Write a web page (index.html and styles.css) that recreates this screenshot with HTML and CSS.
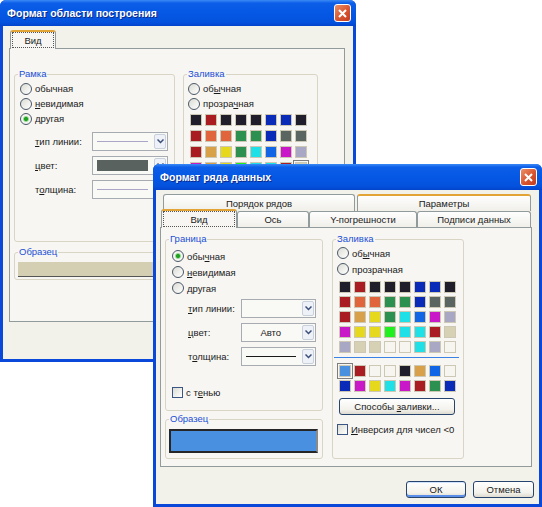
FILE: index.html
```html
<!DOCTYPE html>
<html lang="ru">
<head>
  <meta charset="UTF-8">
  <meta name="viewport" content="width=device-width, initial-scale=1.0">
  <title>Формат ряда данных</title>
  <link rel="stylesheet" href="styles.css">
</head>
<body>
  <div class="desktop">

    <!-- окно позади -->
    <div class="window back">
      <div class="titlebar">
        <span class="title">Формат области построения</span>
        <span class="close"><svg width="9" height="9" viewBox="0 0 9 9"><path d="M1 1L8 8M8 1L1 8" stroke="#fff" stroke-width="2"/></svg></span>
      </div>
      <div class="client">
        <div class="tabrow">
          <div class="tab active"><span class="focus">Вид</span></div>
        </div>
        <div class="panel">
          <div class="cols">
            <fieldset class="group frame-b">
              <legend>Рамка</legend>
              <div class="inner">
                <label class="radio"><i></i><span>обычная</span></label>
                <label class="radio"><i></i><span><u>н</u>евидимая</span></label>
                <label class="radio"><i class="on"></i><span><u>д</u>ругая</span></label>
                <div class="field">
                  <span class="lbl"><u>т</u>ип линии:</span>
                  <span class="combo"><span class="val"><span class="line pale"></span></span><span class="arr"><svg width="7" height="5" viewBox="0 0 7 5"><path d="M.5 .5L3.5 3.5L6.5 .5" fill="none" stroke="#3c4f78" stroke-width="1.5"/></svg></span></span>
                </div>
                <div class="field">
                  <span class="lbl"><u>ц</u>вет:</span>
                  <span class="combo"><span class="val"><span class="fillbox"></span></span><span class="arr"><svg width="7" height="5" viewBox="0 0 7 5"><path d="M.5 .5L3.5 3.5L6.5 .5" fill="none" stroke="#3c4f78" stroke-width="1.5"/></svg></span></span>
                </div>
                <div class="field">
                  <span class="lbl">т<u>о</u>лщина:</span>
                  <span class="combo"><span class="val"><span class="line pale"></span></span><span class="arr"><svg width="7" height="5" viewBox="0 0 7 5"><path d="M.5 .5L3.5 3.5L6.5 .5" fill="none" stroke="#3c4f78" stroke-width="1.5"/></svg></span></span>
                </div>
              </div>
            </fieldset>
            <fieldset class="group fill-b">
              <legend>Заливка</legend>
              <div class="inner">
                <label class="radio"><i></i><span>об<u>ы</u>чная</span></label>
                <label class="radio"><i></i><span>прозра<u>ч</u>ная</span></label>
                <div class="palette">
                  <span class="k"></span><span class="r"></span><span class="k"></span><span class="k"></span><span class="k"></span><span class="b"></span><span class="b"></span><span class="k"></span>
                  <span class="r"></span><span class="o"></span><span class="o"></span><span class="g"></span><span class="g"></span><span class="b"></span><span class="gy"></span><span class="gy"></span>
                  <span class="r"></span><span class="t"></span><span class="y"></span><span class="g"></span><span class="c"></span><span class="bl"></span><span class="m"></span><span class="lv"></span>
                  <span class="m"></span><span class="t"></span><span class="y"></span><span class="lg"></span><span class="c"></span><span class="c"></span><span class="r"></span><span class="kh sel"></span>
                </div>
              </div>
            </fieldset>
          </div>
          <fieldset class="group sample-b">
            <legend>Образец</legend>
            <div class="inner">
              <div class="preview khaki"></div>
            </div>
          </fieldset>
        </div>
      </div>
    </div>

    <!-- окно спереди -->
    <div class="window front">
      <div class="titlebar">
        <span class="title">Формат ряда данных</span>
        <span class="close"><svg width="9" height="9" viewBox="0 0 9 9"><path d="M1 1L8 8M8 1L1 8" stroke="#fff" stroke-width="2"/></svg></span>
      </div>
      <div class="client">
        <div class="tabrow top">
          <div class="tab w-order">Порядок рядов</div>
          <div class="tab hot w-params">Параметры</div>
        </div>
        <div class="tabrow low">
          <div class="tab active rise w-view"><span class="focus">Вид</span></div>
          <div class="tab w-axis">Ось</div>
          <div class="tab w-err">Y-погрешности</div>
          <div class="tab w-labels">Подписи данных</div>
        </div>
        <div class="panel">
          <div class="cols">
            <div class="stack">
              <fieldset class="group frame-f">
                <legend>Граница</legend>
                <div class="inner">
                  <label class="radio"><i class="on"></i><span>обы<u>ч</u>ная</span></label>
                  <label class="radio"><i></i><span><u>н</u>евидимая</span></label>
                  <label class="radio"><i></i><span><u>д</u>ругая</span></label>
                  <div class="field">
                    <span class="lbl"><u>т</u>ип линии:</span>
                    <span class="combo"><span class="val"></span><span class="arr"><svg width="7" height="5" viewBox="0 0 7 5"><path d="M.5 .5L3.5 3.5L6.5 .5" fill="none" stroke="#3c4f78" stroke-width="1.5"/></svg></span></span>
                  </div>
                  <div class="field">
                    <span class="lbl"><u>ц</u>вет:</span>
                    <span class="combo"><span class="val">Авто</span><span class="arr"><svg width="7" height="5" viewBox="0 0 7 5"><path d="M.5 .5L3.5 3.5L6.5 .5" fill="none" stroke="#3c4f78" stroke-width="1.5"/></svg></span></span>
                  </div>
                  <div class="field">
                    <span class="lbl">т<u>о</u>лщина:</span>
                    <span class="combo"><span class="val"><span class="line"></span></span><span class="arr"><svg width="7" height="5" viewBox="0 0 7 5"><path d="M.5 .5L3.5 3.5L6.5 .5" fill="none" stroke="#3c4f78" stroke-width="1.5"/></svg></span></span>
                  </div>
                  <div class="check shadow"><i></i><span>с т<u>е</u>нью</span></div>
                </div>
              </fieldset>
              <fieldset class="group sample-f">
                <legend>Образец</legend>
                <div class="inner">
                  <div class="preview sky"></div>
                </div>
              </fieldset>
            </div>
            <fieldset class="group fill-f">
              <legend>Заливка</legend>
              <div class="inner">
                <label class="radio"><i></i><span>об<u>ы</u>чная</span></label>
                <label class="radio"><i></i><span>прозрачная</span></label>
                <div class="palette">
                  <span class="k"></span><span class="r"></span><span class="k"></span><span class="k"></span><span class="k"></span><span class="b"></span><span class="b"></span><span class="k"></span>
                  <span class="r"></span><span class="o"></span><span class="o"></span><span class="g"></span><span class="g"></span><span class="b"></span><span class="gy"></span><span class="gy"></span>
                  <span class="r"></span><span class="t"></span><span class="y"></span><span class="g"></span><span class="c"></span><span class="bl"></span><span class="m"></span><span class="lv"></span>
                  <span class="m"></span><span class="y"></span><span class="y"></span><span class="lg"></span><span class="c"></span><span class="c"></span><span class="r"></span><span class="kh"></span>
                  <span class="lv"></span><span class="kh"></span><span class="kh"></span><span class="w"></span><span class="w"></span><span class="c"></span><span class="lv"></span><span class="w"></span>
                </div>
                <div class="sep"></div>
                <div class="palette extra">
                  <span class="sb sel"></span><span class="r"></span><span class="w"></span><span class="w"></span><span class="k"></span><span class="t"></span><span class="bl"></span><span class="w"></span>
                  <span class="b"></span><span class="m"></span><span class="y"></span><span class="c"></span><span class="m"></span><span class="r"></span><span class="g"></span><span class="b"></span>
                </div>
                <div class="btn ways"><span>Способы <u>з</u>аливки...</span></div>
                <div class="check invert"><i></i><span><u>И</u>нверсия для чисел &lt;0</span></div>
              </div>
            </fieldset>
          </div>
        </div>
        <div class="buttons">
          <div class="btn ok">ОК</div>
          <div class="btn">Отмена</div>
        </div>
      </div>
    </div>

  </div>
</body>
</html>
```

FILE: styles.css
```css
body {
  margin: 0;
  background: #fff;
  font-family: "Liberation Sans", Arial, sans-serif;
  font-size: 9.5px;
  color: #1a1a1a;
}
.desktop {
  position: relative;
  width: 542px;
  height: 507px;
  overflow: hidden;
}

/* окна */
.window {
  position: absolute;
  display: flex;
  flex-direction: column;
  box-sizing: border-box;
  padding: 0 3px 3px;
  background: #0a48da;
  border-radius: 6px 6px 0 0;
}
.back {
  left: 0;
  top: 0;
  width: 356px;
  height: 362px;
}
.front {
  left: 153px;
  top: 164px;
  width: 389px;
  height: 343px;
}
.titlebar {
  display: flex;
  align-items: center;
  justify-content: space-between;
  height: 26px;
  margin: 0 -3px;
  padding: 0 5px 0 7px;
  border-radius: 6px 6px 0 0;
  background: linear-gradient(#3a8af5, #0c5ee8 12%, #0558e4 50%, #0452de 85%, #0344cc);
  color: #fff;
  font-size: 10.5px;
  font-weight: bold;
  text-shadow: 1px 1px 0 #0b2a8a;
}
.close {
  display: flex;
  align-items: center;
  justify-content: center;
  width: 17px;
  height: 18px;
  box-sizing: border-box;
  border: 1px solid #fff;
  border-radius: 3px;
  background: linear-gradient(135deg, #ec9068, #d8552f 55%, #c23c1e);
}
.client {
  flex: 1;
  background: #f2f1ea;
}
.back .client {
  padding: 4px 0 0 6px;
}
.front .client {
  padding: 5px 0 0 4px;
}

/* вкладки */
.tabrow {
  display: flex;
  align-items: flex-end;
  padding-left: 1px;
}
.tabrow.top {
  height: 16px;
  padding-left: 3px;
}
.tabrow.low {
  height: 16px;
}
.tab {
  display: flex;
  align-items: center;
  justify-content: center;
  box-sizing: border-box;
  height: 16px;
  border: 1px solid #919b9c;
  border-bottom: 0;
  border-radius: 3px 3px 0 0;
  background: linear-gradient(#fefefe, #f0efe9);
}
.tabrow.top .tab {
  height: 17px;
}
.tab.hot {
  border-top: 2px solid #e3a437;
}
.tab.active {
  position: relative;
  z-index: 1;
  height: 19px;
  margin-bottom: -1px;
  border-top: 2px solid #e3a437;
  background: #f7f6f2;
}
.back .tab.active {
  width: 46px;
}
.tab.rise {
  margin-top: -2px;
}
.focus {
  display: flex;
  align-items: center;
  justify-content: center;
  align-self: stretch;
  flex: 1;
  margin: 1px 2px 2px;
  outline: 1px dotted #555;
}
.w-order { width: 192px; margin-right: 2px; }
.w-params { width: 174px; }
.w-view { width: 76px; }
.w-axis { width: 72px; }
.w-err { width: 108px; }
.w-labels { width: 114px; }

.panel {
  box-sizing: border-box;
  border: 1px solid #919b9c;
  background: #f7f6f2;
}
.back .panel {
  width: 336px;
  height: 274px;
  padding: 19px 0 0 4px;
}
.front .panel {
  width: 372px;
  height: 240px;
  padding: 5px 0 0 4px;
}
.cols {
  display: flex;
  align-items: flex-start;
}
.stack {
  display: flex;
  flex-direction: column;
  gap: 2px;
}

/* группы */
.group {
  box-sizing: border-box;
  min-width: 0;
  margin: 0;
  padding: 0;
  border: 1px solid #d9d5c4;
  border-radius: 3px;
}
.group legend {
  margin-left: 3px;
  padding: 0 1px;
  font-size: 9.5px;
  line-height: 12px;
  color: #1a4fd6;
}
.frame-b {
  width: 161px;
  height: 174px;
}
.frame-b .inner {
  padding: 1px 6px 0 5px;
}
.fill-b {
  width: 135px;
  height: 174px;
  margin-left: 8px;
}
.fill-b .inner {
  padding: 1px 0 0 4px;
}
.sample-b {
  width: 326px;
  height: 34px;
  margin-top: 4px;
}
.sample-b .inner {
  padding: 4px 0 0 3px;
}
.frame-f {
  width: 158px;
  height: 178px;
}
.frame-f .inner {
  padding: 3px 6px 0;
}
.sample-f {
  width: 158px;
  height: 46px;
}
.sample-f .inner {
  padding: 4px 0 0 3px;
}
.fill-f {
  width: 132px;
  height: 226px;
  margin-left: 9px;
}
.fill-f .inner {
  padding: 0 0 0 4px;
}

/* переключатели */
.radio,
.check {
  display: flex;
  align-items: center;
  gap: 3px;
}
.radio {
  height: 16px;
}
.back .radio {
  height: 15px;
}
.radio i,
.check i {
  display: block;
  flex: none;
  width: 11px;
  height: 11px;
  box-sizing: border-box;
  border: 1px solid #3b5682;
  background: linear-gradient(135deg, #dcdcd4, #fff);
}
.radio i {
  width: 12px;
  height: 12px;
  border-color: #4b5868;
  border-radius: 50%;
}
.radio i.on {
  background: radial-gradient(circle, #22a222 0 1.6px, #8fd68f 2.4px, #f4f4f0 3.4px);
}
.check.shadow {
  height: 16px;
  margin-top: 18px;
}
.check.invert {
  height: 11px;
  margin-top: 9px;
}

/* поля со списком */
.field {
  display: flex;
  align-items: center;
  margin-top: 5px;
}
.frame-f .field .lbl { width: 53px; margin-left: 16px; }
.frame-b .field .lbl { width: 57px; margin-left: 15px; }
.frame-f div.field:first-of-type { margin-top: 3px; }
.frame-b div.field:first-of-type { margin-top: 6px; }
.combo {
  display: flex;
  align-items: center;
  box-sizing: border-box;
  height: 19px;
  padding: 0 1px 0 4px;
  border: 1px solid #a7abb2;
  background: #f9f9f6;
}
.frame-f .combo { width: 76px; }
.frame-b .combo { width: 77px; }
.combo .val {
  display: flex;
  flex: 1;
  align-items: center;
  justify-content: center;
  align-self: stretch;
  padding-right: 6px;
}
.combo .arr {
  display: flex;
  align-items: center;
  justify-content: center;
  box-sizing: border-box;
  width: 12px;
  height: 15px;
  border: 1px solid #c8d0dc;
  border-radius: 2px;
  background: #eef1f7;
}
.line {
  width: 100%;
  height: 1px;
  background: #1a1a1a;
}
.line.pale {
  background: #a9a6c8;
}
.fillbox {
  width: 100%;
  height: 11px;
  background: #59625e;
}

/* палитра */
.palette {
  display: grid;
  grid-template-columns: repeat(8, 12px);
  grid-auto-rows: 12px;
  gap: 3px;
}
.fill-b .palette {
  row-gap: 4px;
  margin: 3px 0 0 2px;
}
.fill-f .palette {
  margin: 4px 0 0 2px;
}
.fill-f .palette.extra {
  margin-top: 7px;
}
.palette span {
  box-sizing: border-box;
  border: 1px solid #cdc8b4;
}
.palette span.sel {
  outline: 1px solid #7d7d7d;
  outline-offset: 1px;
}
.sep {
  height: 1px;
  margin: 4px 4px 0 -3px;
  background: #3a82e4;
}
.k { background: #201e2a; }
.r { background: #a81c22; }
.o { background: #e0643c; }
.g { background: #2c9050; }
.b { background: #0a2ab8; }
.gy { background: #5a6460; }
.t { background: #d8a048; }
.y { background: #e6d81c; }
.c { background: #1ee0e6; }
.bl { background: #1266e6; }
.m { background: #c818c8; }
.lv { background: #a8a8c4; }
.lg { background: #20f020; }
.kh { background: #d6d0b4; }
.w { background: #f6f5f0; }
.sb { background: #4a90e0; }

.preview {
  box-sizing: border-box;
}
.preview.khaki {
  width: 330px;
  height: 15px;
  border-bottom: 1px solid #555;
  background: #d4cfb2;
}
.preview.sky {
  width: 149px;
  height: 24px;
  border: 2px solid #262626;
  border-right-color: #8a8a8a;
  background: #4a90e0;
}

/* кнопки */
.btn {
  display: flex;
  align-items: center;
  justify-content: center;
  box-sizing: border-box;
  height: 17px;
  border: 1px solid #27446f;
  border-radius: 3px;
  background: linear-gradient(#fff, #f3f2ec 70%, #dedad0);
}
.btn.ways {
  width: 116px;
  margin: 6px 0 0 2px;
}
.buttons {
  display: flex;
  justify-content: flex-end;
  gap: 7px;
  margin: 14px 5px 0 0;
}
.buttons .btn {
  width: 61px;
}
.btn.ok {
  width: 60px;
  box-shadow: inset 0 -2px 0 #5a8ee8, inset 0 1px 0 #cfe3ff;
}
```
